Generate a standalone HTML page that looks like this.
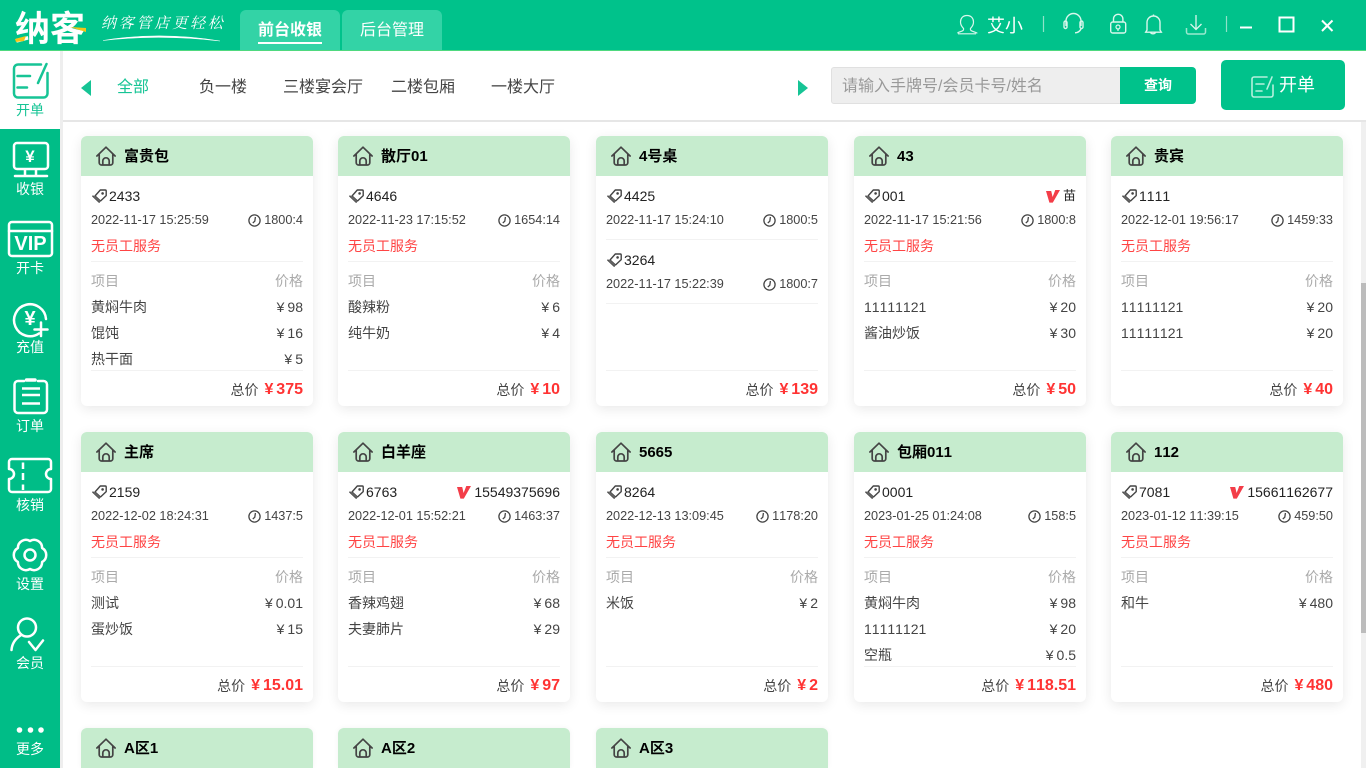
<!DOCTYPE html>
<html lang="zh"><head><meta charset="utf-8"><title>纳客</title>
<style>
*{box-sizing:border-box;font-kerning:none}
html,body{margin:0;width:1366px;height:768px;overflow:hidden;background:#fff;font-family:"Liberation Sans","Noto Sans CJK SC",sans-serif;color:#333}
#app{position:absolute;left:0;top:0;width:1366px;height:768px;overflow:hidden;background:#fff}
.abs{position:absolute}
#top{position:absolute;left:0;top:0;width:1366px;height:51px;background:#00c28b;border-bottom:1px solid #4fd97f}
.tab{position:absolute;top:10px;width:100px;height:40px;background:#33d3a6;border-radius:6px 6px 0 0;color:#fff;font-size:16px;text-align:center}
.tab u{text-decoration:none;display:inline-block;height:25px;line-height:24px;margin-top:9px;vertical-align:top}
#side{position:absolute;left:0;top:51px;width:60px;height:717px;background:#00bd87}
#act{position:absolute;left:0;top:51px;width:60px;height:79px;background:#fff;border-bottom:1px solid #00bd87}
#gut{position:absolute;left:60px;top:51px;width:3px;height:717px;background:#eee}
.lb{position:absolute;left:0;width:60px;text-align:center;color:#fff;font-size:14px;line-height:20px}
.nav{position:absolute;top:77px;font-size:16px;line-height:22px;color:#444}
#div{position:absolute;left:63px;top:120px;width:1303px;height:2px;background:#e6e6e6}
#track{position:absolute;left:1361px;top:122px;width:5px;height:646px;background:#f0f0f0}
#thumb{position:absolute;left:1361px;top:283px;width:5px;height:350px;background:#bcbcbc}
.c{position:absolute;width:232px;height:270px;background:#fff;border-radius:6px;box-shadow:0 3px 12px rgba(0,0,0,.09)}
.c.s{height:40px;border-radius:6px 6px 0 0;box-shadow:0 0 6px rgba(0,0,0,.05)}
.h{position:relative;height:40px;background:#c6ecce;border-radius:6px 6px 0 0;color:#000;font-weight:bold;font-size:15px;line-height:41px;padding-left:43px}
.h svg{position:absolute;left:15px;top:10px}
.w{position:absolute;left:10px;right:10px;height:20px;display:flex;justify-content:space-between;align-items:center;font-size:14px;line-height:20px;white-space:nowrap}
.t1{top:50px;color:#222}.t2{top:74px;font-size:12.7px;color:#444}.t3{top:100px;color:#f44}
.hh{top:135px;color:#aaa}.i1{top:161px;color:#444}.i2{top:187px;color:#444}.i3{top:213px;color:#444}
.f{top:244px;justify-content:flex-end;color:#444}
.f b{color:#f33;font-size:16px;margin-left:6px;word-spacing:-1.5px}
.l{position:absolute;left:10px;right:10px;height:1px;background:#f2f2f2}
.l1{top:125px}.l2{top:234px}
.k{display:flex;align-items:center}
.y{margin-right:3px}
.k svg{flex:none}
</style></head><body>
<div id="app">
<svg width="0" height="0" style="position:absolute"><defs>
<symbol id="house" viewBox="0 0 20 20"><path d="M.9 10 10 1.2 19.1 10M3.2 7.8V16.6a2.4 2.4 0 0 0 2.4 2.4h8.8a2.4 2.4 0 0 0 2.4-2.4V7.8M6.8 19v-4a3.2 3.2 0 0 1 6.400 0v4" fill="none" stroke="#444" stroke-width="1.7" stroke-linecap="round" stroke-linejoin="round"/></symbol>
<symbol id="tag" viewBox="0 0 15 14"><path d="M8.3 1H13.2a1 1 0 0 1 1 1V6.6L8.5 12 3 7z" fill="none" stroke="#444" stroke-width="1.4" stroke-linejoin="round"/><path d="M1 7.2 7.2 13" fill="none" stroke="#444" stroke-width="1.6" stroke-linecap="round"/><path d="M3 7 8.500 12 7 13 1 7.500z" fill="#666"/><circle cx="10.6" cy="4.4" r="1.3" fill="#444"/></symbol>
<symbol id="clock" viewBox="0 0 13 13"><circle cx="6.5" cy="6.5" r="5.6" fill="none" stroke="#444" stroke-width="1.3"/><path d="M7.4 3 6.8 7.2 4.8 9" fill="none" stroke="#444" stroke-width="1.3"/></symbol>
<symbol id="vv" viewBox="0 0 14 13"><path d="M0 1H5.2L6.600 7 9.300 0H14L6.800 12.600H3.400z" fill="#f33d48"/></symbol>
</defs></svg>

<div id="top"></div>
<div class="abs" style="left:15px;top:6px;color:#fff;font:bold 35px/42px 'Noto Sans CJK SC',sans-serif;letter-spacing:0">纳客</div>
<div class="abs" style="left:101px;top:12px;color:#fff;font:italic 15px/22px 'Noto Serif CJK SC',serif;letter-spacing:2.8px;white-space:nowrap">纳客管店更轻松</div>
<svg class="abs" style="left:100px;top:30px" width="125" height="14"><path d="M3 10.500Q60 1 120 11 60 4 3 10.500z" fill="#fff" stroke="#fff" stroke-width=".6"/></svg>
<svg class="abs" style="left:14px;top:20px" width="75" height="24"><path d="M1 19 12 16 10 21 2 22z" fill="#f5c518"/><path d="M56 7 72 8 72 12z" fill="#f5c518"/></svg>

<div class="tab" style="left:240px;font-weight:bold"><u style="border-bottom:2px solid #fff">前台收银</u></div>
<div class="tab" style="left:342px"><u>后台管理</u></div>

<svg class="abs" style="left:930px;top:0" width="436" height="50" fill="none" stroke="#d9f7ec" stroke-width="1.2">
<path d="M37 15.500c-4.500 0-6.500 3.200-6.500 6.500s1.600 5 3 6.400c.5 1-.2 2.200-1.500 2.700L28 32.500v1M37 15.500c4.500 0 6.500 3.200 6.500 6.500s-1.600 5-3 6.400c-.5 1 .2 2.200 1.500 2.700l4.800 1.800v.6M28 33.800h18"/>
<path d="M113.500 16v16" stroke="#8fe2c9"/>
<path d="M136 26v-5a7.500 7.500 0 0 1 15 0v5M134 22.500v4.500a1.500 1.500 0 0 0 3 0v-4.500a1.500 1.500 0 0 0-3 0zM150 22.500v4.500a1.500 1.500 0 0 0 3 0v-4.500a1.500 1.500 0 0 0-3 0zM151 29c-1 2-3 3.800-6 3.800" stroke-width="1.400"/>
<rect x="180.700" y="22" width="15" height="11" rx="2" stroke-width="1.400"/><path d="M183.500 22v-3a4.700 4.700 0 0 1 9.400 0v3" stroke-width="1.400"/><circle cx="188" cy="27" r="2" stroke-width="1.200"/><path d="M188 29v2"/>
<path d="M217 30V22.500a6.500 6.500 0 0 1 13 0V30l1.300 2.200h-15.600zM220.500 32.500a3 3 0 0 0 5 0M223.500 15.500v-1" stroke-width="1.400"/>
<path d="M266 15v14M260.500 24l5.500 5.500 5.500-5.500" stroke-width="1.300"/><path d="M256.500 28v4a2 2 0 0 0 2 2h15a2 2 0 0 0 2-2v-4" stroke="#9be9cf" stroke-width="1.500"/>
<path d="M296.500 16v16" stroke="#8fe2c9"/>
<path d="M310 27.500h12" stroke="#fff" stroke-width="2"/>
<rect x="349.500" y="17.500" width="14" height="14" stroke="#fff" stroke-width="2"/>
<path d="M392 20.500l10.500 10.500M402.500 20.500 392 31" stroke="#fff" stroke-width="2"/>
</svg>
<div class="abs" style="left:987px;top:13px;color:#fff;font-size:18px;line-height:26px">艾小</div>

<div id="side"></div><div id="act"></div><div id="gut"></div>

<svg class="abs" style="left:0;top:0" width="60" height="768" fill="none" stroke="#fff" stroke-width="2.500" stroke-linecap="round" stroke-linejoin="round">
<path d="M41 64.500H18a4 4 0 0 0-4 4V93.500a4 4 0 0 0 4 4H43.500a4 4 0 0 0 4-4V73M17.500 76H30M17.500 87.500H27M46.500 64 38 83" stroke="#16c495"/>
<rect x="14" y="143" width="34" height="26" rx="3"/><path d="M15 176H47M25 169.500V176M36 169.500V176"/>
<rect x="9" y="222" width="43" height="34" rx="3"/><path d="M9 231H52"/>
<path d="M39 333.500A16 16 0 1 1 46 319" /><path d="M41 322.500V336M34.500 329.500H47.500"/>
<path d="M24 381H18a3.500 3.500 0 0 0-3.500 3.500v25a3.500 3.500 0 0 0 3.500 3.500H43.500a3.500 3.500 0 0 0 3.500-3.500v-25a3.500 3.500 0 0 0-3.500-3.500H38"/><path d="M26.500 380H35" stroke-width="3.500"/><path d="M22 388.500H40M22 395H40M22 403.500H40" stroke-linecap="butt"/>
<path d="M12 459H48a3 3 0 0 1 3 3V469a5 5 0 0 0 0 10V489a3 3 0 0 1-3 3H12a3 3 0 0 1-3-3V479a5 5 0 0 0 0-10V462a3 3 0 0 1 3-3z"/><path d="M23 462.500V469M23 473V480M23 484.500V490" stroke-linecap="butt"/>
<path d="M30 541A8 8 0 0 1 42.100 548A8 8 0 0 1 42.100 562A8 8 0 0 1 30 569A8 8 0 0 1 17.900 562A8 8 0 0 1 17.900 548A8 8 0 0 1 30 541Z"/><circle cx="30" cy="555" r="5.500"/>
<circle cx="27" cy="627.500" r="9"/><path d="M11.500 650C12 643 16 638.500 20.500 635.500M29 642L35.500 650 43 640.500"/>
<circle cx="19.500" cy="730" r="2.800" fill="#fff" stroke="none"/><circle cx="30.500" cy="730" r="2.800" fill="#fff" stroke="none"/><circle cx="41" cy="730" r="2.800" fill="#fff" stroke="none"/>
</svg>
<div class="abs" style="left:0;top:144px;width:60px;text-align:center;color:#fff;font:bold 17px/26px 'Liberation Sans',sans-serif;">¥</div>
<div class="abs" style="left:0;top:233px;width:61px;text-align:center;color:#fff;font:bold 20px/22px 'Liberation Sans',sans-serif">VIP</div>
<div class="abs" style="left:0;top:305px;width:60px;text-align:center;color:#fff;font:bold 20px/28px 'Liberation Sans',sans-serif;">¥</div>

<div class="lb" style="top:100px;color:#16c495;">开单</div>
<div class="lb" style="top:179px">收银</div>
<div class="lb" style="top:258px">开卡</div>
<div class="lb" style="top:337px">充值</div>
<div class="lb" style="top:416px">订单</div>
<div class="lb" style="top:495px">核销</div>
<div class="lb" style="top:574px">设置</div>
<div class="lb" style="top:653px">会员</div>
<div class="lb" style="top:739px">更多</div>

<svg class="abs" style="left:81px;top:80px" width="11" height="16"><path d="M10 0V16L0 8z" fill="#16c495"/></svg>
<svg class="abs" style="left:798px;top:80px" width="11" height="16"><path d="M0 0V16L10 8z" fill="#16c495"/></svg>
<div class="nav" style="left:117px;color:#16c495">全部</div>
<div class="nav" style="left:199px">负一楼</div>
<div class="nav" style="left:283px">三楼宴会厅</div>
<div class="nav" style="left:391px">二楼包厢</div>
<div class="nav" style="left:491px">一楼大厅</div>

<div class="abs" style="left:831px;top:67px;width:290px;height:37px;background:#eee;border:1px solid #e0e0e0;border-radius:3px 0 0 3px;padding-left:10px;font-size:16px;line-height:38px;color:#999">请输入手牌号/会员卡号/姓名</div>
<div class="abs" style="left:1120px;top:67px;width:76px;height:37px;background:#00c28b;border-radius:0 4px 4px 0;color:#fff;font-size:14px;font-weight:bold;line-height:37px;text-align:center">查询</div>
<div class="abs" style="left:1221px;top:60px;width:124px;height:50px;background:#00c28b;border-radius:5px"></div>
<svg class="abs" style="left:1221px;top:60px" width="124" height="50" fill="none" stroke="#b5f0dd" stroke-width="1.600" stroke-linecap="round"><path d="M46 17H33a2 2 0 0 0-2 2V35a2 2 0 0 0 2 2H50a2 2 0 0 0 2-2V25M35 24H43M35 31H41M51 17 46 29"/></svg>
<div class="abs" style="left:1279px;top:71px;color:#fff;font-size:18px;line-height:28px">开单</div>

<div id="div"></div><div id="track"></div><div id="thumb"></div>

<!-- row 1 -->
<div class="c" style="left:81px;top:136px"><div class="h"><svg width="20" height="20"><use href="#house"/></svg>富贵包</div>
<div class="w t1"><span class="k"><svg width="15" height="14" style="margin:0 2px 0 1px"><use href="#tag"/></svg>2433</span></div>
<div class="w t2"><span>2022-11-17 15:25:59</span><span class="k"><svg width="13" height="13" style="margin-right:3px"><use href="#clock"/></svg>1800:4</span></div>
<div class="w t3"><span>无员工服务</span></div><div class="l l1"></div>
<div class="w hh"><span>项目</span><span>价格</span></div>
<div class="w i1"><span>黄焖牛肉</span><span><span class="y">¥</span>98</span></div>
<div class="w i2"><span>馄饨</span><span><span class="y">¥</span>16</span></div>
<div class="w i3"><span>热干面</span><span><span class="y">¥</span>5</span></div>
<div class="l l2"></div><div class="w f"><span>总价</span><b>¥ 375</b></div></div>

<div class="c" style="left:338px;top:136px"><div class="h"><svg width="20" height="20"><use href="#house"/></svg>散厅01</div>
<div class="w t1"><span class="k"><svg width="15" height="14" style="margin:0 2px 0 1px"><use href="#tag"/></svg>4646</span></div>
<div class="w t2"><span>2022-11-23 17:15:52</span><span class="k"><svg width="13" height="13" style="margin-right:3px"><use href="#clock"/></svg>1654:14</span></div>
<div class="w t3"><span>无员工服务</span></div><div class="l l1"></div>
<div class="w hh"><span>项目</span><span>价格</span></div>
<div class="w i1"><span>酸辣粉</span><span><span class="y">¥</span>6</span></div>
<div class="w i2"><span>纯牛奶</span><span><span class="y">¥</span>4</span></div>
<div class="l l2"></div><div class="w f"><span>总价</span><b>¥ 10</b></div></div>

<div class="c" style="left:596px;top:136px"><div class="h"><svg width="20" height="20"><use href="#house"/></svg>4号桌</div>
<div class="w t1"><span class="k"><svg width="15" height="14" style="margin:0 2px 0 1px"><use href="#tag"/></svg>4425</span></div>
<div class="w t2"><span>2022-11-17 15:24:10</span><span class="k"><svg width="13" height="13" style="margin-right:3px"><use href="#clock"/></svg>1800:5</span></div>
<div class="l" style="top:103px"></div>
<div class="w t1" style="top:114px"><span class="k"><svg width="15" height="14" style="margin:0 2px 0 1px"><use href="#tag"/></svg>3264</span></div>
<div class="w t2" style="top:138px"><span>2022-11-17 15:22:39</span><span class="k"><svg width="13" height="13" style="margin-right:3px"><use href="#clock"/></svg>1800:7</span></div>
<div class="l" style="top:167px"></div>
<div class="l l2"></div><div class="w f"><span>总价</span><b>¥ 139</b></div></div>

<div class="c" style="left:854px;top:136px"><div class="h"><svg width="20" height="20"><use href="#house"/></svg>43</div>
<div class="w t1"><span class="k"><svg width="15" height="14" style="margin:0 2px 0 1px"><use href="#tag"/></svg>001</span><span class="k" style="font-size:13px"><svg width="14" height="13" style="margin-right:3px"><use href="#vv"/></svg>苗</span></div>
<div class="w t2"><span>2022-11-17 15:21:56</span><span class="k"><svg width="13" height="13" style="margin-right:3px"><use href="#clock"/></svg>1800:8</span></div>
<div class="w t3"><span>无员工服务</span></div><div class="l l1"></div>
<div class="w hh"><span>项目</span><span>价格</span></div>
<div class="w i1"><span>11111121</span><span><span class="y">¥</span>20</span></div>
<div class="w i2"><span>酱油炒饭</span><span><span class="y">¥</span>30</span></div>
<div class="l l2"></div><div class="w f"><span>总价</span><b>¥ 50</b></div></div>

<div class="c" style="left:1111px;top:136px"><div class="h"><svg width="20" height="20"><use href="#house"/></svg>贵宾</div>
<div class="w t1"><span class="k"><svg width="15" height="14" style="margin:0 2px 0 1px"><use href="#tag"/></svg>1111</span></div>
<div class="w t2"><span>2022-12-01 19:56:17</span><span class="k"><svg width="13" height="13" style="margin-right:3px"><use href="#clock"/></svg>1459:33</span></div>
<div class="w t3"><span>无员工服务</span></div><div class="l l1"></div>
<div class="w hh"><span>项目</span><span>价格</span></div>
<div class="w i1"><span>11111121</span><span><span class="y">¥</span>20</span></div>
<div class="w i2"><span>11111121</span><span><span class="y">¥</span>20</span></div>
<div class="l l2"></div><div class="w f"><span>总价</span><b>¥ 40</b></div></div>

<!-- row 2 -->
<div class="c" style="left:81px;top:432px"><div class="h"><svg width="20" height="20"><use href="#house"/></svg>主席</div>
<div class="w t1"><span class="k"><svg width="15" height="14" style="margin:0 2px 0 1px"><use href="#tag"/></svg>2159</span></div>
<div class="w t2"><span>2022-12-02 18:24:31</span><span class="k"><svg width="13" height="13" style="margin-right:3px"><use href="#clock"/></svg>1437:5</span></div>
<div class="w t3"><span>无员工服务</span></div><div class="l l1"></div>
<div class="w hh"><span>项目</span><span>价格</span></div>
<div class="w i1"><span>测试</span><span><span class="y">¥</span>0.01</span></div>
<div class="w i2"><span>蛋炒饭</span><span><span class="y">¥</span>15</span></div>
<div class="l l2"></div><div class="w f"><span>总价</span><b>¥ 15.01</b></div></div>

<div class="c" style="left:338px;top:432px"><div class="h"><svg width="20" height="20"><use href="#house"/></svg>白羊座</div>
<div class="w t1"><span class="k"><svg width="15" height="14" style="margin:0 2px 0 1px"><use href="#tag"/></svg>6763</span><span class="k"><svg width="14" height="13" style="margin-right:3px"><use href="#vv"/></svg>15549375696</span></div>
<div class="w t2"><span>2022-12-01 15:52:21</span><span class="k"><svg width="13" height="13" style="margin-right:3px"><use href="#clock"/></svg>1463:37</span></div>
<div class="w t3"><span>无员工服务</span></div><div class="l l1"></div>
<div class="w hh"><span>项目</span><span>价格</span></div>
<div class="w i1"><span>香辣鸡翅</span><span><span class="y">¥</span>68</span></div>
<div class="w i2"><span>夫妻肺片</span><span><span class="y">¥</span>29</span></div>
<div class="l l2"></div><div class="w f"><span>总价</span><b>¥ 97</b></div></div>

<div class="c" style="left:596px;top:432px"><div class="h"><svg width="20" height="20"><use href="#house"/></svg>5665</div>
<div class="w t1"><span class="k"><svg width="15" height="14" style="margin:0 2px 0 1px"><use href="#tag"/></svg>8264</span></div>
<div class="w t2"><span>2022-12-13 13:09:45</span><span class="k"><svg width="13" height="13" style="margin-right:3px"><use href="#clock"/></svg>1178:20</span></div>
<div class="w t3"><span>无员工服务</span></div><div class="l l1"></div>
<div class="w hh"><span>项目</span><span>价格</span></div>
<div class="w i1"><span>米饭</span><span><span class="y">¥</span>2</span></div>
<div class="l l2"></div><div class="w f"><span>总价</span><b>¥ 2</b></div></div>

<div class="c" style="left:854px;top:432px"><div class="h"><svg width="20" height="20"><use href="#house"/></svg>包厢011</div>
<div class="w t1"><span class="k"><svg width="15" height="14" style="margin:0 2px 0 1px"><use href="#tag"/></svg>0001</span></div>
<div class="w t2"><span>2023-01-25 01:24:08</span><span class="k"><svg width="13" height="13" style="margin-right:3px"><use href="#clock"/></svg>158:5</span></div>
<div class="w t3"><span>无员工服务</span></div><div class="l l1"></div>
<div class="w hh"><span>项目</span><span>价格</span></div>
<div class="w i1"><span>黄焖牛肉</span><span><span class="y">¥</span>98</span></div>
<div class="w i2"><span>11111121</span><span><span class="y">¥</span>20</span></div>
<div class="w i3"><span>空瓶</span><span><span class="y">¥</span>0.5</span></div>
<div class="l l2"></div><div class="w f"><span>总价</span><b>¥ 118.51</b></div></div>

<div class="c" style="left:1111px;top:432px"><div class="h"><svg width="20" height="20"><use href="#house"/></svg>112</div>
<div class="w t1"><span class="k"><svg width="15" height="14" style="margin:0 2px 0 1px"><use href="#tag"/></svg>7081</span><span class="k"><svg width="14" height="13" style="margin-right:3px"><use href="#vv"/></svg>15661162677</span></div>
<div class="w t2"><span>2023-01-12 11:39:15</span><span class="k"><svg width="13" height="13" style="margin-right:3px"><use href="#clock"/></svg>459:50</span></div>
<div class="w t3"><span>无员工服务</span></div><div class="l l1"></div>
<div class="w hh"><span>项目</span><span>价格</span></div>
<div class="w i1"><span>和牛</span><span><span class="y">¥</span>480</span></div>
<div class="l l2"></div><div class="w f"><span>总价</span><b>¥ 480</b></div></div>

<!-- row 3 -->
<div class="c s" style="left:81px;top:728px"><div class="h"><svg width="20" height="20"><use href="#house"/></svg>A区1</div></div>
<div class="c s" style="left:338px;top:728px"><div class="h"><svg width="20" height="20"><use href="#house"/></svg>A区2</div></div>
<div class="c s" style="left:596px;top:728px"><div class="h"><svg width="20" height="20"><use href="#house"/></svg>A区3</div></div>
</div>
</body></html>
